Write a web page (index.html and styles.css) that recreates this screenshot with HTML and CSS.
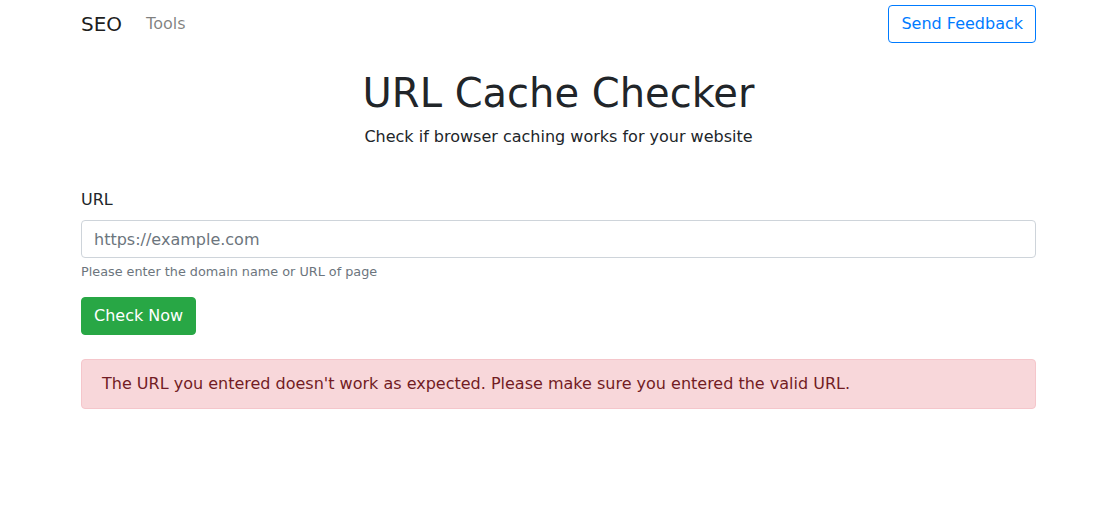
FILE: index.html
```html
<!DOCTYPE html>
<html lang="en">
<head>
<meta charset="utf-8">
<title>URL Cache Checker</title>
<link rel="stylesheet" href="styles.css">
</head>
<body>
<nav class="navbar">
  <div class="container nav-inner">
    <div class="nav-left">
      <a class="brand" href="#">SEO</a>
      <a class="nav-link" href="#">Tools</a>
    </div>
    <a class="btn btn-outline" href="#">Send Feedback</a>
  </div>
</nav>
<main class="container">
  <header class="hero">
    <h1>URL Cache Checker</h1>
    <p class="lead">Check if browser caching works for your website</p>
  </header>
  <form class="form">
    <div class="form-group">
      <label class="label" for="url">URL</label>
      <input class="input" id="url" type="text" placeholder="https://example.com">
      <small class="help">Please enter the domain name or URL of page</small>
    </div>
    <button class="btn btn-success" type="button">Check Now</button>
  </form>
  <div class="alert">The URL you entered doesn't work as expected. Please make sure you entered the valid URL.</div>
</main>
</body>
</html>
```

FILE: styles.css
```css
* { box-sizing: border-box; }
html, body { margin: 0; padding: 0; }
body {
  font-family: "DejaVu Sans", sans-serif;
  font-size: 16px;
  line-height: 1.5;
  color: #212529;
  background: #fff;
}
a { text-decoration: none; }
.container {
  max-width: 985px;
  padding: 0 15px;
  margin: 0 0 0 66px;
}
.navbar { padding: 4px 0; }
.nav-inner {
  display: flex;
  align-items: center;
  justify-content: space-between;
}
.nav-left { display: flex; align-items: center; }
.brand {
  font-size: 20px;
  line-height: 30px;
  padding: 5px 0;
  margin-right: 16px;
  color: rgba(0,0,0,.9);
}
.nav-link {
  padding: 8px;
  color: rgba(0,0,0,.5);
}
.btn {
  display: inline-block;
  font-family: inherit;
  font-size: 16px;
  line-height: 24px;
  padding: 6px 12px;
  border: 1px solid transparent;
  border-radius: 4px;
  cursor: pointer;
}
.btn-outline {
  color: #007bff;
  border-color: #007bff;
  background: transparent;
}
.btn-success {
  color: #fff;
  background: #28a745;
  border-color: #28a745;
}
.hero { text-align: center; padding-top: 21px; margin-bottom: 39px; }
h1 {
  font-size: 40px;
  font-weight: 500;
  line-height: 1.2;
  margin: 0 0 8px;
}
.lead { margin: 0; }
.form-group { margin-bottom: 16px; }
.label { display: block; margin-bottom: 8px; }
.input {
  display: block;
  width: 100%;
  height: 38px;
  padding: 6px 12px;
  font-family: inherit;
  font-size: 16px;
  line-height: 24px;
  color: #495057;
  border: 1px solid #ced4da;
  border-radius: 4px;
  background: #fff;
}
.input::placeholder { color: #6c757d; opacity: 1; }
.help {
  display: block;
  margin-top: 4px;
  font-size: 12.8px;
  color: #6c757d;
}
.alert {
  margin-top: 24px;
  padding: 12px 20px;
  border: 1px solid #f5c6cb;
  border-radius: 4px;
  background: #f8d7da;
  color: #721c24;
}
```
